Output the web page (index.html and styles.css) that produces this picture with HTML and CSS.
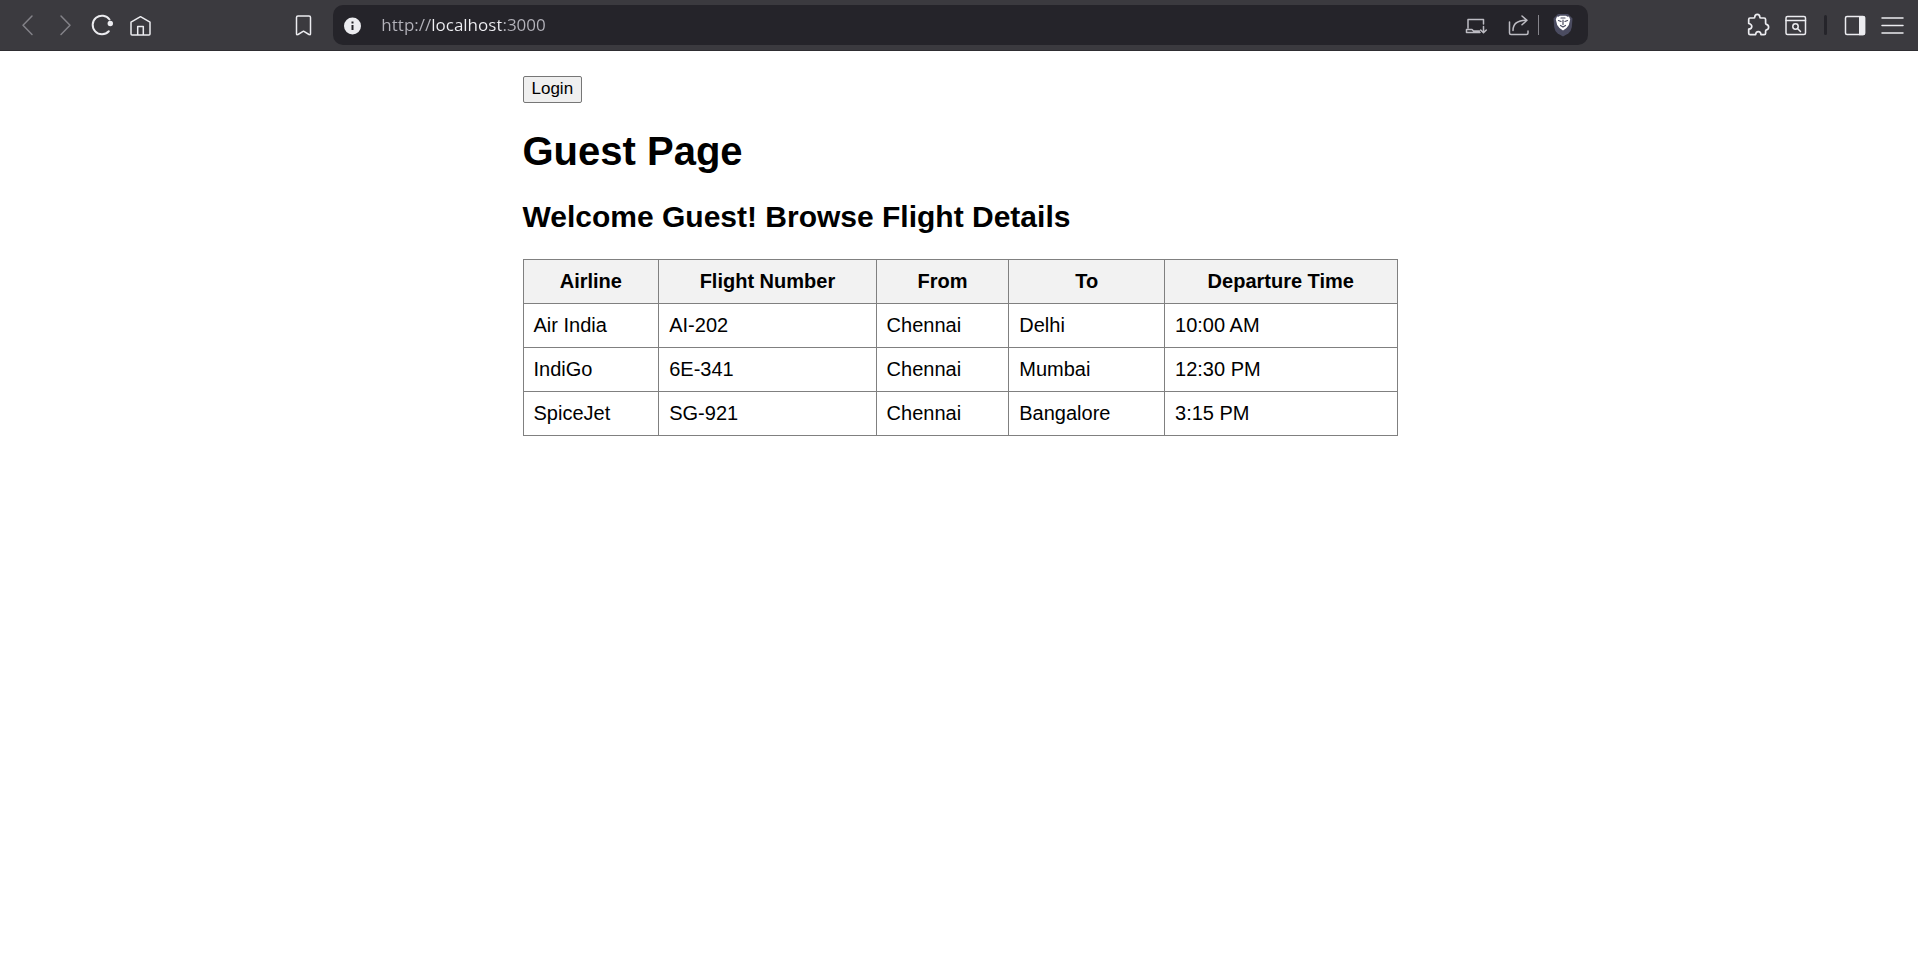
FILE: index.html
```html
<!DOCTYPE html>
<html lang="en">
<head>
<meta charset="utf-8">
<title>Guest Page</title>
<link rel="stylesheet" href="styles.css">
</head>
<body>
<header class="toolbar">
  <nav class="nav" aria-label="Navigation">
    <button class="tool dim" aria-label="Back"><svg class="icon" viewBox="0 0 24 24"><path d="M17 3 8 12.300 17 21.500"/></svg></button>
    <button class="tool dim" aria-label="Forward"><svg class="icon" viewBox="0 0 24 24"><path d="M8 3l9 9.300-9 9.200"/></svg></button>
    <button class="tool" aria-label="Reload"><svg class="icon" viewBox="0 0 24 24"><path stroke-width="2" d="M18.500 6.500A9.300 9.300 0 1 0 17.800 18.300"/><circle class="solid" cx="19.300" cy="10.500" r="2.700"/></svg></button>
    <button class="tool" aria-label="Home"><svg class="icon" viewBox="0 0 24 24"><path d="M2 9.200 11.500 3.700 21 9.200V21q0 1-1 1H3q-1 0-1-1zM8.700 22v-8.500h5.600V22"/></svg></button>
    <button class="tool bookmark" aria-label="Bookmark"><svg class="icon" viewBox="0 0 24 24"><path d="M6 3h11q1.500 0 1.500 1.500v16q0 2-1.500 1l-5.500-3.300L6 21.500q-1.500 1-1.500-1v-16Q4.500 3 6 3z"/></svg></button>
  </nav>
  <div class="address">
    <button class="site" aria-label="Site information"><svg class="icon" viewBox="0 0 24 24"><circle class="solid" cx="12.500" cy="13" r="8.500"/><path class="mark" d="M12.500 12v5M12.500 8.500v2"/></svg></button>
    <input class="url" type="text" aria-label="Address" value="http://localhost:3000">
    <div class="actions">
      <button class="tool soft" aria-label="Install app"><svg class="icon" viewBox="0 0 24 24"><path d="M4 15V6.500h15.500V11M2.500 16.500h5.500l1.500 1.500h6M2.500 16.500v3H16M19.500 13.500v6M16.700 17l2.800 2.800 2.800-2.800"/></svg></button>
      <button class="tool soft" aria-label="Share"><svg class="icon" viewBox="0 0 24 24"><path d="M2.500 9v11q0 1.500 1.500 1.500h15.500q1.500 0 1.500-1.500v-2M6 17.500C6 11 10 7.300 19.500 7.300M15 3l5 4.300-5 4.500"/></svg></button>
    </div>
    <span class="rule"></span>
    <button class="tool shields" aria-label="Brave Shields"><svg class="icon" viewBox="0 0 24 24"><path class="shield" d="M7 1h10l4.500 4.500-.7 8.500q-.5 4-3.500 6.500L12 23.500l-5.300-3Q3.700 18 3.200 14L2.500 5.500z"/><path class="lion" d="M9 2.700h6l1.500 1 1.500-.2 1.200 3-1.400 5.500-2.300 3-3.500 2.500-3.500-2.500-2.300-3-1.400-5.500L6 3.500l1.500.2z"/><path class="face" d="M7.500 7.500l2.500 1M16.500 7.500l-2.500 1M12 7v4.500M9.500 12.500l2.500 1.500 2.500-1.500M10 5h4"/></svg></button>
  </div>
  <div class="extras">
    <button class="tool" aria-label="Extensions"><svg class="icon" viewBox="0 0 24 24"><path stroke-width="1.700" d="M4 5h3.500q1.300 0 1.300-1 0-2.700 2.500-2.700T13.800 4q0 1 1.300 1h3q1.500 0 1.500 1.500v3.700q0 1 .8 1.200 2.200.6 2.200 2.800t-2.200 2.700q-.8.200-.8 1.100v2.200q0 1.500-1.500 1.500h-3.100q-.2-3-2.700-3t-2.700 3H4.200q-1.500 0-1.500-1.500v-4q3.100-.4 3.100-2.700T2.700 10.500v-4Q2.700 5 4 5z"/></svg></button>
    <button class="tool" aria-label="Search tabs"><svg class="icon" viewBox="0 0 24 24"><rect x="2" y="3.500" width="19.500" height="18" rx="1.500"/><path d="M2 7.500h19.500M13.500 15.500l3 3"/><circle cx="11.500" cy="13.500" r="2.700"/></svg></button>
    <span class="divider"></span>
    <button class="tool" aria-label="Sidebar"><svg class="icon" viewBox="0 0 24 24"><rect x="3.500" y="3.500" width="19" height="18" rx="1.500"/><path class="solid" d="M17 3h4.500q1.700 0 1.700 1.500v16q0 1.700-1.700 1.700H17z"/></svg></button>
    <button class="tool" aria-label="Menu"><svg class="icon" viewBox="0 0 24 24"><path d="M2 5h21M2 12.500h21M2 20h21"/></svg></button>
  </div>
</header>
<main class="page">
  <button class="login">Login</button>
  <h1>Guest Page</h1>
  <h2>Welcome Guest! Browse Flight Details</h2>
  <table class="flights">
    <thead>
      <tr><th>Airline</th><th>Flight Number</th><th>From</th><th>To</th><th>Departure Time</th></tr>
    </thead>
    <tbody>
      <tr><td>Air India</td><td>AI-202</td><td>Chennai</td><td>Delhi</td><td>10:00 AM</td></tr>
      <tr><td>IndiGo</td><td>6E-341</td><td>Chennai</td><td>Mumbai</td><td>12:30 PM</td></tr>
      <tr><td>SpiceJet</td><td>SG-921</td><td>Chennai</td><td>Bangalore</td><td>3:15 PM</td></tr>
    </tbody>
  </table>
</main>
</body>
</html>
```
FILE: styles.css
```css
* { box-sizing: border-box; }

body {
  margin: 0;
  background: #fff;
  color: #000;
  font-family: "Liberation Sans", Arial, sans-serif;
  font-size: 20px;
}

/* Browser toolbar */
.toolbar {
  display: grid;
  grid-template-columns: 1fr 65.5% 1fr;
  align-items: center;
  padding: 5px 0 5px 3px;
  background: #3b3a3f;
  border-bottom: 1px solid #2e2d31;
}

.nav {
  display: flex;
  padding: 0 10px 0 5px;
}

.extras {
  display: flex;
  align-items: center;
  justify-content: flex-end;
  padding-right: 7px;
}

.tool,
.site {
  display: flex;
  align-items: center;
  justify-content: center;
  width: 38px;
  height: 38px;
  padding: 0;
  border: 0;
  background: none;
  color: #ececf0;
}

.dim { color: #838288; }
.soft { color: #bdbcc3; }
.bookmark { margin-left: auto; }

.icon {
  width: 24px;
  height: 24px;
  fill: none;
  stroke: currentColor;
  stroke-width: 1.5;
  stroke-linejoin: round;
  stroke-linecap: round;
}

.icon .solid { fill: currentColor; stroke: none; }
.icon .mark { stroke: #25242a; stroke-width: 2; stroke-linecap: butt; }
.icon .shield { fill: #4b4c61; stroke: none; }
.icon .lion { fill: #fff; stroke: none; }
.icon .face { stroke: #4b4c61; stroke-width: 1.2; }

.address {
  display: flex;
  align-items: center;
  height: 40px;
  padding-right: 6px;
  border-radius: 10px;
  background: #25242a;
}

.actions {
  display: flex;
  gap: 5px;
}

.url {
  flex: 1;
  min-width: 0;
  height: 30px;
  margin-left: 10px;
  padding: 0;
  border: 0;
  outline: 0;
  background: linear-gradient(90deg, #b4b3bb 50px, #f0f0f4 50px, #f0f0f4 120px, #b4b3bb 120px);
  -webkit-background-clip: text;
  background-clip: text;
  color: transparent;
  font: 17px/30px "Open Sans", sans-serif;
}

.rule {
  width: 1px;
  height: 20px;
  margin-right: 5px;
  background: #85848b;
}

.divider {
  width: 3px;
  height: 20px;
  margin: 0 8px 0 9px;
  border-radius: 2px;
  background: #25242a;
}

/* Page content */
.page {
  max-width: 877px;
  margin: 25px auto;
  padding-left: 2px;
}

.login {
  display: block;
  padding: 2px 8px 4px;
  border: 1px solid #767676;
  border-radius: 2px;
  background: #efefef;
  color: #000;
  font: 17px/19px "Liberation Sans", Arial, sans-serif;
}

h1 {
  margin: 25px 0 26px;
  font-size: 40px;
  line-height: 46px;
}

h2 {
  margin: 25px 0;
  font-size: 30px;
  line-height: 34px;
}

.flights {
  width: 100%;
  border-collapse: collapse;
}

.flights th,
.flights td {
  padding: 10px;
  border: 1px solid #808080;
  line-height: 23px;
  text-align: left;
}

.flights th {
  background: #f2f2f2;
  text-align: center;
}
```
